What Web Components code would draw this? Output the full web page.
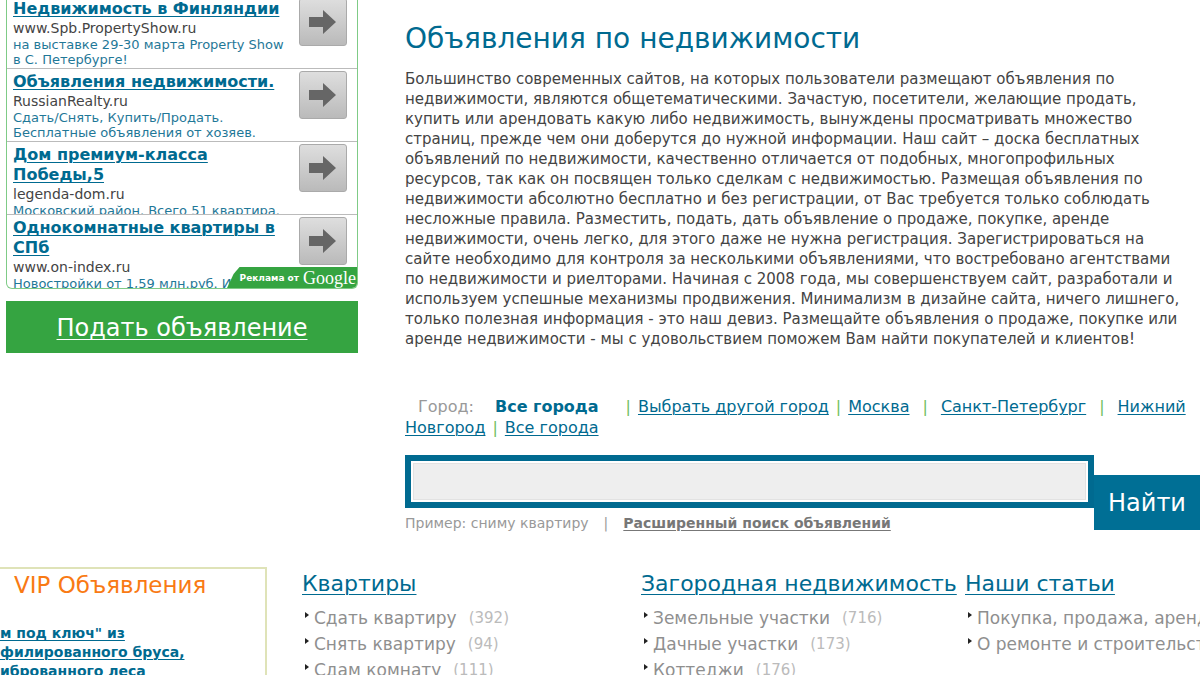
<!DOCTYPE html>
<html lang="ru">
<head>
<meta charset="utf-8">
<title>Объявления по недвижимости</title>
<style>
html { overflow: hidden; }
body { margin: 0; background: #fff; color: #444; font-family: "DejaVu Sans", Verdana, sans-serif; --blue: #006a90; --green: #35a441; }
</style>
</head>
<body>
<realty-page></realty-page>
<script>
function define(name, html) {
  const t = document.createElement('template');
  t.innerHTML = html;
  customElements.define(name, class extends HTMLElement {
    constructor() {
      super();
      this.attachShadow({ mode: 'open' }).append(t.content.cloneNode(true));
    }
  });
}

define('ad-item', `
<style>
:host { display: flex; justify-content: space-between; box-sizing: border-box; height: 73px; overflow: hidden; padding: 3px 10px 0 6px; border-bottom: 1px solid #bbb; }
.text { flex: 1; min-width: 0; white-space: nowrap; }
a { display: block; color: var(--blue); }
.title { font-weight: bold; font-size: 16px; line-height: 20px; text-decoration-thickness: 1px; text-underline-offset: 2px; }
.site { font-size: 14px; line-height: 18px; color: #444; }
.desc { font-size: 13px; line-height: 15px; color: #1f7898; }
.go { flex: none; box-sizing: border-box; width: 48px; height: 48px; margin-top: -1px; border: 1px solid #aaa; border-radius: 3px; background: linear-gradient(#dedede, #bababa); }
svg { display: block; }
</style>
<div class="text"><a class="title" href="#"><slot name="title"></slot></a><div class="site"><slot name="site"></slot></div><div class="desc"><slot></slot></div></div>
<a class="go" href="#" aria-label="Перейти"><svg width="46" height="46" viewBox="0 0 46 46"><path d="M9 18H23V11L36 23L23 35V28H9Z" fill="#666"/></svg></a>`);

define('ad-panel', `
<style>
:host { display: block; position: relative; margin-top: -4px; border: 1px solid #7fcb86; border-top: 0; border-radius: 0 0 6px 6px; overflow: hidden; }
::slotted(:last-child) { border-bottom: 0; }
.by { position: absolute; right: -1px; bottom: -1px; display: flex; align-items: center; gap: 4px; height: 22px; padding: 0 2px 0 13px; background: var(--green); clip-path: polygon(13px 0, 100% 0, 100% 100%, 0 100%, 7px 7px); color: #fff; font-size: 9px; font-weight: bold; white-space: nowrap; }
.by b { font: 18px "Liberation Serif", serif; }
</style>
<slot></slot>
<div class="by">Реклама от <b>Google</b></div>`);

define('post-button', `
<style>
:host { display: block; margin-top: 12px; }
a { display: block; box-sizing: border-box; height: 52px; line-height: 54px; text-align: center; background: var(--green); color: #fff; font-size: 24px; text-decoration-thickness: 1px; text-underline-offset: 3px; }
</style>
<a href="#"><slot></slot></a>`);

define('intro-text', `
<style>
:host { display: block; }
h1 { margin: 0; font-size: 28px; line-height: 36px; font-weight: normal; color: var(--blue); }
p { margin: 12px 0 0; font-size: 15px; line-height: 20px; white-space: nowrap; }
</style>
<h1>Объявления по недвижимости</h1>
<p>Большинство современных сайтов, на которых пользователи размещают объявления по<br>недвижимости, являются общетематическими. Зачастую, посетители, желающие продать,<br>купить или арендовать какую либо недвижимость, вынуждены просматривать множество<br>страниц, прежде чем они доберутся до нужной информации. Наш сайт – доска бесплатных<br>объявлений по недвижимости, качественно отличается от подобных, многопрофильных<br>ресурсов, так как он посвящен только сделкам с недвижимостью. Размещая объявления по<br>недвижимости абсолютно бесплатно и без регистрации, от Вас требуется только соблюдать<br>несложные правила. Разместить, подать, дать объявление о продаже, покупке, аренде<br>недвижимости, очень легко, для этого даже не нужна регистрация. Зарегистрироваться на<br>сайте необходимо для контроля за несколькими объявлениями, что востребовано агентствами<br>по недвижимости и риелторами. Начиная с 2008 года, мы совершенствуем сайт, разработали и<br>используем успешные механизмы продвижения. Минимализм в дизайне сайта, ничего лишнего,<br>только полезная информация - это наш девиз. Размещайте объявления о продаже, покупке или<br>аренде недвижимости - мы с удовольствием поможем Вам найти покупателей и клиентов!</p>`);

define('city-nav', `
<style>
:host { display: block; margin-top: 47px; font-size: 16px; line-height: 21px; color: #999; white-space: nowrap; }
.row { display: flex; }
a { color: var(--blue); text-decoration-thickness: 1px; text-underline-offset: 2px; }
.label { padding-left: 13px; }
b { color: var(--blue); padding: 0 20px 0 21px; }
i { font-style: normal; color: #6fc060; padding: 0 7px; }
i.wide { padding: 0 13px; }
</style>
<div class="row"><span class="label">Город:</span><b>Все города</b><i>|</i><a href="#">Выбрать другой город</a><i>|</i><a href="#">Москва</a><i class="wide">|</i><a href="#">Санкт-Петербург</a><i class="wide">|</i><a href="#">Нижний</a></div>
<div class="row"><a href="#">Новгород</a><i>|</i><a href="#">Все города</a></div>`);

define('search-box', `
<style>
:host { display: block; margin-top: 17px; }
form { display: flex; align-items: flex-start; margin: 0; }
.field { flex: 1; box-sizing: border-box; height: 53px; padding: 2px; border: 6px solid var(--blue); }
input { display: block; box-sizing: border-box; width: 100%; height: 100%; padding: 0 8px; border: 1px solid #e2e2e2; background: #eee; font: 20px "DejaVu Sans", sans-serif; outline: 0; }
button { flex: none; width: 106px; height: 55px; margin-top: 20px; padding: 0; border: 0; background: #006f95; color: #fff; font: 24px "DejaVu Sans", sans-serif; }
.hint { display: flex; gap: 15px; margin-top: -16px; font-size: 14px; line-height: 18px; color: #999; white-space: nowrap; }
.hint a { color: #777; font-weight: bold; text-decoration-thickness: 1px; text-underline-offset: 2px; }
</style>
<form><div class="field"><input type="text" aria-label="Поиск объявлений"></div><button type="button">Найти</button></form>
<div class="hint"><span>Пример: сниму квартиру</span><span>|</span><a href="#">Расширенный поиск объявлений</a></div>`);

define('vip-box', `
<style>
:host { display: block; box-sizing: border-box; height: 120px; border: 2px solid #dfe3b8; border-left: 0; }
h2 { margin: 0; padding-left: 14px; font-size: 23px; line-height: 32px; font-weight: normal; color: #f97a14; }
a { display: block; margin-top: 23px; font-size: 14px; line-height: 19px; font-weight: bold; color: var(--blue); white-space: nowrap; text-decoration-thickness: 1px; text-underline-offset: 2px; }
</style>
<h2>VIP Объявления</h2>
<a href="#">м под ключ" из<br>филированного бруса,<br>иброванного леса</a>`);

define('link-section', `
<style>
:host { display: block; padding-top: 1px; white-space: nowrap; }
h2 { margin: 0; font-size: 22px; line-height: 32px; font-weight: normal; }
h2 a { color: var(--blue); text-decoration-thickness: 1px; text-underline-offset: 3px; }
ul { list-style: none; margin: 5px 0 0; padding: 0; }
</style>
<h2><a href="#"><slot name="title"></slot></a></h2>
<ul><slot></slot></ul>`);

define('section-link', `
<style>
:host { display: flex; font-size: 17px; line-height: 26px; color: #bbb; }
svg { flex: none; margin: 7px 5px 0 3px; }
a { color: #8f8f8f; text-decoration: none; }
.count { padding-left: 12px; font-size: 15px; }
</style>
<svg width="4" height="6" viewBox="0 0 4 6"><path d="M0 0L4 3L0 6Z" fill="#222"/></svg><a href="#"><slot></slot></a><span class="count"><slot name="count"></slot></span>`);

define('realty-page', `
<style>
:host { display: block; height: 100vh; overflow: hidden; }
.top { display: grid; grid-template-columns: 352px minmax(0, 1fr); column-gap: 47px; padding-left: 6px; }
main { padding-top: 21px; }
.bottom { display: grid; grid-template-columns: 267px 374px 324px minmax(0, 1fr); margin-top: 35px; }
.flats { margin-left: 35px; }
</style>
<div class="top">
<aside>
<ad-panel>
<ad-item><span slot="title">Недвижимость в Финляндии</span><span slot="site">www.Spb.PropertyShow.ru</span>на выставке 29-30 марта Property Show<br>в С. Петербурге!</ad-item>
<ad-item><span slot="title">Объявления недвижимости.</span><span slot="site">RussianRealty.ru</span>Сдать/Снять, Купить/Продать.<br>Бесплатные объявления от хозяев.</ad-item>
<ad-item><span slot="title">Дом премиум-класса<br>Победы,5</span><span slot="site">legenda-dom.ru</span>Московский район. Всего 51 квартира.</ad-item>
<ad-item><span slot="title">Однокомнатные квартиры в<br>СПб</span><span slot="site">www.on-index.ru</span>Новостройки от 1,59 млн.руб. И</ad-item>
</ad-panel>
<post-button>Подать объявление</post-button>
</aside>
<main><intro-text></intro-text><city-nav></city-nav><search-box></search-box></main>
</div>
<div class="bottom">
<vip-box></vip-box>
<link-section class="flats"><span slot="title">Квартиры</span>
<section-link>Сдать квартиру<span slot="count">(392)</span></section-link>
<section-link>Снять квартиру<span slot="count">(94)</span></section-link>
<section-link>Сдам комнату<span slot="count">(111)</span></section-link></link-section>
<link-section><span slot="title">Загородная недвижимость</span>
<section-link>Земельные участки<span slot="count">(716)</span></section-link>
<section-link>Дачные участки<span slot="count">(173)</span></section-link>
<section-link>Коттеджи<span slot="count">(176)</span></section-link></link-section>
<link-section><span slot="title">Наши статьи</span>
<section-link>Покупка, продажа, аренда</section-link>
<section-link>О ремонте и строительстве</section-link></link-section>
</div>`);
</script>
</body>
</html>
